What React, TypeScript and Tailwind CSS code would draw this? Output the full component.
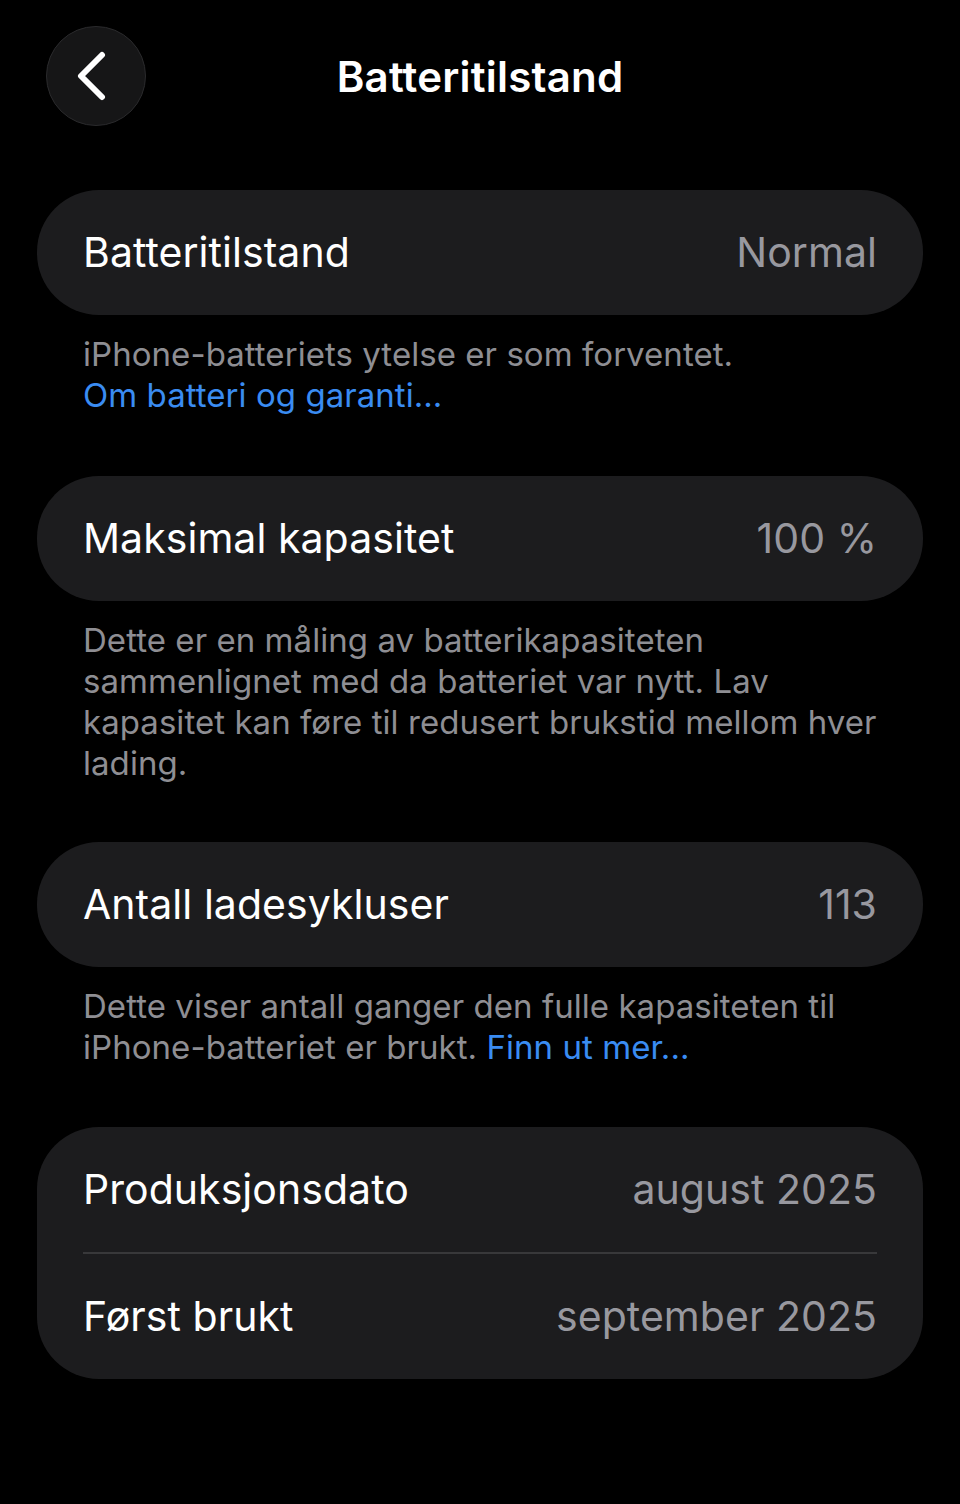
import React from 'react';

const font = { fontFamily: 'Inter, "Noto Sans", sans-serif' };

interface RowProps {
  label: string;
  value: string;
}

const Row: React.FC<RowProps> = ({ label, value }) => (
  <div className="flex h-[125px] items-center justify-between">
    <span className="text-[41px] tracking-[0.05px] text-white">{label}</span>
    <span className="text-[41px] tracking-[0.05px] text-[#98989f]">{value}</span>
  </div>
);

const Card: React.FC<{ children: React.ReactNode }> = ({ children }) => (
  <div className="mx-[37px] rounded-[62px] bg-[#1c1c1e] px-[46px]">{children}</div>
);

const Footer: React.FC<{ children: React.ReactNode }> = ({ children }) => (
  <p className="mx-[37px] mt-[19px] whitespace-nowrap px-[46px] text-[33px] leading-[41px] tracking-[0.05px] text-[#8e8e93]">
    {children}
  </p>
);

const Link: React.FC<{ children: React.ReactNode }> = ({ children }) => (
  <span className="text-[#3a8cf2]">{children}</span>
);

export default function App() {
  return (
    <div className="min-h-[1504px] w-[960px] bg-black" style={font}>
      {/* header */}
      <div className="grid grid-cols-[1fr_auto_1fr] items-center pt-[26px]">
        <div className="pl-[46px]">
          <div className="flex h-[100px] w-[100px] items-center justify-center rounded-full border border-[#2a2a2c] bg-[#161617]">
            <svg width="34" height="50" viewBox="0 0 34 50" fill="none" className="-ml-[8px]">
              <path d="M27 4 L6 25 L27 46" stroke="white" strokeWidth="6" strokeLinecap="round" strokeLinejoin="round" />
            </svg>
          </div>
        </div>
        <h1 className="text-[42px] font-semibold tracking-[0.2px] text-white">Batteritilstand</h1>
        <div />
      </div>

      <div className="mt-[64px]">
        <Card>
          <Row label="Batteritilstand" value="Normal" />
        </Card>
        <Footer>
          iPhone-batteriets ytelse er som forventet.
          <br />
          <Link>Om batteri og garanti...</Link>
        </Footer>
      </div>

      <div className="mt-[60px]">
        <Card>
          <Row label="Maksimal kapasitet" value="100 %" />
        </Card>
        <Footer>
          Dette er en måling av batterikapasiteten
          <br />
          sammenlignet med da batteriet var nytt. Lav
          <br />
          kapasitet kan føre til redusert brukstid mellom hver
          <br />
          lading.
        </Footer>
      </div>

      <div className="mt-[58px]">
        <Card>
          <Row label="Antall ladesykluser" value="113" />
        </Card>
        <Footer>
          Dette viser antall ganger den fulle kapasiteten til
          <br />
          iPhone-batteriet er brukt. <Link>Finn ut mer...</Link>
        </Footer>
      </div>

      <div className="mt-[59px]">
        <Card>
          <Row label="Produksjonsdato" value="august 2025" />
          <div className="h-[2px] bg-[#38383a]" />
          <Row label="Først brukt" value="september 2025" />
        </Card>
      </div>
    </div>
  );
}
